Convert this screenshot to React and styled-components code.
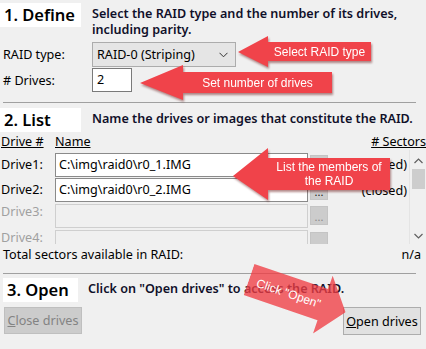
import React from "react";
import styled, { createGlobalStyle } from "styled-components";

const GlobalStyle = createGlobalStyle`
  html, body {
    margin: 0;
    padding: 0;
    background: #f0f0f0;
  }
  body {
    font-family: "Noto Sans", "Open Sans", sans-serif;
    font-size: 12.6px;
    color: #000;
  }
`;

const drives = [
  { id: 1, path: "C:\\img\\raid0\\r0_1.IMG", status: "(closed)", enabled: true },
  { id: 2, path: "C:\\img\\raid0\\r0_2.IMG", status: "(closed)", enabled: true },
  { id: 3, path: "", status: "", enabled: false },
  { id: 4, path: "", status: "", enabled: false },
];

function LeftCallout({ tip, headTop, headBottom, headX, bodyTop, bodyBottom, end, children }) {
  const w = end - tip[0];
  const h = headBottom - headTop;
  const hx = headX - tip[0];
  const bt = bodyTop - headTop;
  const bb = bodyBottom - headTop;
  const ty = tip[1] - headTop;
  const points = `0,${ty} ${hx},0 ${hx},${bt} ${w},${bt} ${w},${bb} ${hx},${bb} ${hx},${h}`;
  return (
    <StCallout $left={tip[0]} $top={headTop} $w={w} $h={h}>
      <svg width={w} height={h}>
        <polygon points={points} fill="#f0434a" />
      </svg>
      <StCalloutLabel $left={hx} $top={bt} $w={w - hx} $h={bb - bt}>
        {children}
      </StCalloutLabel>
    </StCallout>
  );
}

export default function App() {
  return (
    <>
      <GlobalStyle />
      <StWindow>
        <StHead $top={3}>
          <StStepTitle $w={81}>1. Define</StStepTitle>
          <StStepText $gap={11}>
            Select the RAID type and the number of its drives,
            <br />
            including parity.
          </StStepText>
        </StHead>

        <StForm>
          <StFormLabel>RAID type:</StFormLabel>
          <StSelect>
            <span>RAID-0 (Striping)</span>
            <svg width="9" height="6" viewBox="0 0 9 6">
              <polyline points="0.5,0.8 4.5,4.8 8.5,0.8" fill="none" stroke="#333" strokeWidth="1" />
            </svg>
          </StSelect>
          <StFormLabel># Drives:</StFormLabel>
          <StNumberBox>2</StNumberBox>
        </StForm>

        <StRule $top={10} />

        <StHead $top={5}>
          <StStepTitle $w={81}>2. List</StStepTitle>
          <StStepText $gap={11}>Name the drives or images that constitute the RAID.</StStepText>
        </StHead>

        <StColumns>
          <StColDrive>Drive #</StColDrive>
          <StColName>Name</StColName>
          <StColSectors># Sectors</StColSectors>
        </StColumns>

        <StListPane>
          <StRows>
            {drives.map((d) => (
              <StDriveRow key={d.id}>
                <StDriveLabel $enabled={d.enabled}>Drive{d.id}:</StDriveLabel>
                <StPathBox $enabled={d.enabled}>{d.path}</StPathBox>
                <StBrowse $enabled={d.enabled}>...</StBrowse>
                <StStatus>{d.status}</StStatus>
              </StDriveRow>
            ))}
          </StRows>
          <StScrollBar>
            <svg width="9" height="6" viewBox="0 0 9 6">
              <polyline points="0.5,5 4.5,1 8.5,5" fill="none" stroke="#606060" strokeWidth="1.2" />
            </svg>
            <StThumb />
            <StScrollSpacer />
            <svg width="9" height="6" viewBox="0 0 9 6">
              <polyline points="0.5,1 4.5,5 8.5,1" fill="none" stroke="#606060" strokeWidth="1.2" />
            </svg>
          </StScrollBar>
        </StListPane>

        <StTotalRow>
          <span>Total sectors available in RAID:</span>
          <span>n/a</span>
        </StTotalRow>

        <StRule $top={9} />

        <StHead $top={4} $left={3}>
          <StStepTitle $w={75}>3. Open</StStepTitle>
          <StStepText $gap={10}>Click on "Open drives" to access the RAID.</StStepText>
        </StHead>

        <StButtonRow>
          <StButton disabled>
            <u>C</u>lose drives
          </StButton>
          <StButton $primary>
            <u>O</u>pen drives
          </StButton>
        </StButtonRow>

        <LeftCallout tip={[238, 52]} headTop={36} headBottom={67} headX={268} bodyTop={42} bodyBottom={61} end={371}>
          Select RAID type
        </LeftCallout>
        <LeftCallout tip={[140, 83]} headTop={65} headBottom={100} headX={183} bodyTop={72} bodyBottom={93} end={332}>
          Set number of drives
        </LeftCallout>
        <LeftCallout tip={[233, 176]} headTop={148} headBottom={200} headX={268} bodyTop={158} bodyBottom={190} end={390}>
          List the members of
          <br />
          the RAID
        </LeftCallout>

        <StClickArrow>
          <svg width="102" height="61">
            <polygon points="0,14 78,14 78,0 102,30.5 78,61 78,47 0,47" fill="rgba(240,62,68,0.78)" />
          </svg>
          <StClickLabel>Click "Open"</StClickLabel>
        </StClickArrow>
      </StWindow>
    </>
  );
}

const StWindow = styled.div`
  position: relative;
  width: 426px;
  height: 349px;
  overflow: hidden;
  background: #f0f0f0;
  display: flex;
  flex-direction: column;
`;

const StHead = styled.div`
  display: flex;
  align-items: flex-start;
  padding-top: ${({ $top }) => $top}px;
  padding-left: ${({ $left }) => $left || 0}px;
`;

const StStepTitle = styled.div`
  flex: none;
  width: ${({ $w }) => $w}px;
  height: 24px;
  box-sizing: border-box;
  padding-left: 4px;
  background: #fff;
  font-size: 16.5px;
  font-weight: 600;
  line-height: 24px;
  color: #000;
`;

const StStepText = styled.div`
  margin-left: ${({ $gap }) => $gap}px;
  padding-top: 3px;
  font-weight: 600;
  line-height: 16px;
  color: #10102a;
  white-space: nowrap;
`;

const StForm = styled.div`
  display: grid;
  grid-template-columns: 92px auto;
  row-gap: 1px;
  margin-top: 4px;
  align-items: center;
  justify-items: start;
`;

const StFormLabel = styled.div`
  padding-left: 3px;
`;

const StSelect = styled.div`
  box-sizing: border-box;
  width: 144px;
  height: 25px;
  padding: 0 7px 0 4px;
  display: flex;
  align-items: center;
  justify-content: space-between;
  background: #e5e5e5;
  border: 1px solid #acacac;
`;

const StNumberBox = styled.div`
  box-sizing: border-box;
  width: 40px;
  height: 24px;
  padding-left: 4px;
  line-height: 22px;
  background: #fff;
  border: 1px solid #7a7a7a;
`;

const StRule = styled.div`
  margin: ${({ $top }) => $top}px 10px 0 3px;
  height: 1px;
  background: #a0a0a0;
`;

const StColumns = styled.div`
  display: flex;
  align-items: center;
  height: 16px;
  margin-top: 2px;
  line-height: 16px;
  text-decoration: underline;
`;

const StColDrive = styled.div`
  width: 54px;
  padding-left: 1px;
`;

const StColName = styled.div`
  flex: 1;
`;

const StColSectors = styled.div`
  white-space: nowrap;
`;

const StListPane = styled.div`
  display: flex;
  height: 94px;
  overflow: hidden;
`;

const StRows = styled.div`
  flex: 1;
  display: flex;
  flex-direction: column;
  padding-top: 2px;
`;

const StDriveRow = styled.div`
  flex: none;
  display: flex;
  align-items: center;
  height: 25.6px;
`;

const StDriveLabel = styled.div`
  width: 54px;
  padding-left: 1px;
  align-self: ${({ $enabled }) => ($enabled ? "center" : "flex-start")};
  margin-top: ${({ $enabled }) => ($enabled ? 0 : 2)}px;
  line-height: ${({ $enabled }) => ($enabled ? 16 : 14)}px;
  color: ${({ $enabled }) => ($enabled ? "#000" : "#a0a0a0")};
`;

const StPathBox = styled.div`
  box-sizing: border-box;
  width: 253px;
  height: 24px;
  padding-left: 3px;
  line-height: 22px;
  white-space: nowrap;
  background: ${({ $enabled }) => ($enabled ? "#fff" : "#f0f0f0")};
  border: 1px solid ${({ $enabled }) => ($enabled ? "#8a8a8a" : "#cfcfcf")};
`;

const StBrowse = styled.div`
  box-sizing: border-box;
  width: 18px;
  height: 19px;
  margin-left: 2px;
  display: flex;
  align-items: flex-end;
  justify-content: center;
  font-size: 11px;
  line-height: 14px;
  background: #cccccc;
  border: 1px solid #c4c4c4;
  color: ${({ $enabled }) => ($enabled ? "#202020" : "#8a8a8a")};
`;

const StStatus = styled.div`
  flex: 1;
  padding-right: 2px;
  text-align: right;
  white-space: nowrap;
`;

const StScrollBar = styled.div`
  flex: none;
  width: 17px;
  display: flex;
  flex-direction: column;
  align-items: center;
  padding: 8px 0 5px;
  box-sizing: border-box;
  border-left: 1px solid #e4e4e4;
`;

const StThumb = styled.div`
  width: 13px;
  height: 20px;
  margin-top: 5px;
  background: #cdcdcd;
`;

const StScrollSpacer = styled.div`
  flex: 1;
`;

const StTotalRow = styled.div`
  display: flex;
  justify-content: space-between;
  height: 18px;
  margin-top: 2px;
  padding: 0 5px 0 3px;
  line-height: 18px;
`;

const StButtonRow = styled.div`
  display: flex;
  justify-content: space-between;
  align-items: flex-start;
  margin-top: 5px;
  padding: 0 5px 0 4px;
`;

const StButton = styled.button`
  box-sizing: border-box;
  width: 78px;
  height: ${({ $primary }) => ($primary ? 28 : 27)}px;
  padding: 0;
  font-family: inherit;
  font-size: 12.6px;
  background: ${({ $primary }) => ($primary ? "#e1e1e1" : "#cccccc")};
  border: 1px solid ${({ $primary }) => ($primary ? "#adadad" : "#bfbfbf")};
  color: ${({ $primary }) => ($primary ? "#000" : "#838383")};
`;

const StCallout = styled.div`
  position: absolute;
  left: ${({ $left }) => $left}px;
  top: ${({ $top }) => $top}px;
  width: ${({ $w }) => $w}px;
  height: ${({ $h }) => $h}px;
  filter: drop-shadow(1px 2px 1px rgba(90, 0, 0, 0.45));

  svg {
    display: block;
  }
`;

const StCalloutLabel = styled.div`
  position: absolute;
  left: ${({ $left }) => $left}px;
  top: ${({ $top }) => $top}px;
  width: ${({ $w }) => $w}px;
  height: ${({ $h }) => $h}px;
  display: flex;
  align-items: center;
  justify-content: center;
  text-align: center;
  font-family: "Liberation Sans", Arial, sans-serif;
  font-size: 12px;
  line-height: 14px;
  color: #fff;
`;

const StClickArrow = styled.div`
  position: absolute;
  left: 248.5px;
  top: 248.5px;
  width: 102px;
  height: 61px;
  transform-origin: 0 30.5px;
  transform: rotate(18.8deg);

  svg {
    display: block;
  }
`;

const StClickLabel = styled.div`
  position: absolute;
  left: 0;
  top: 14px;
  width: 84px;
  height: 33px;
  display: flex;
  align-items: center;
  justify-content: center;
  font-family: "Liberation Sans", Arial, sans-serif;
  font-size: 12px;
  color: #fff;
  white-space: nowrap;
`;
